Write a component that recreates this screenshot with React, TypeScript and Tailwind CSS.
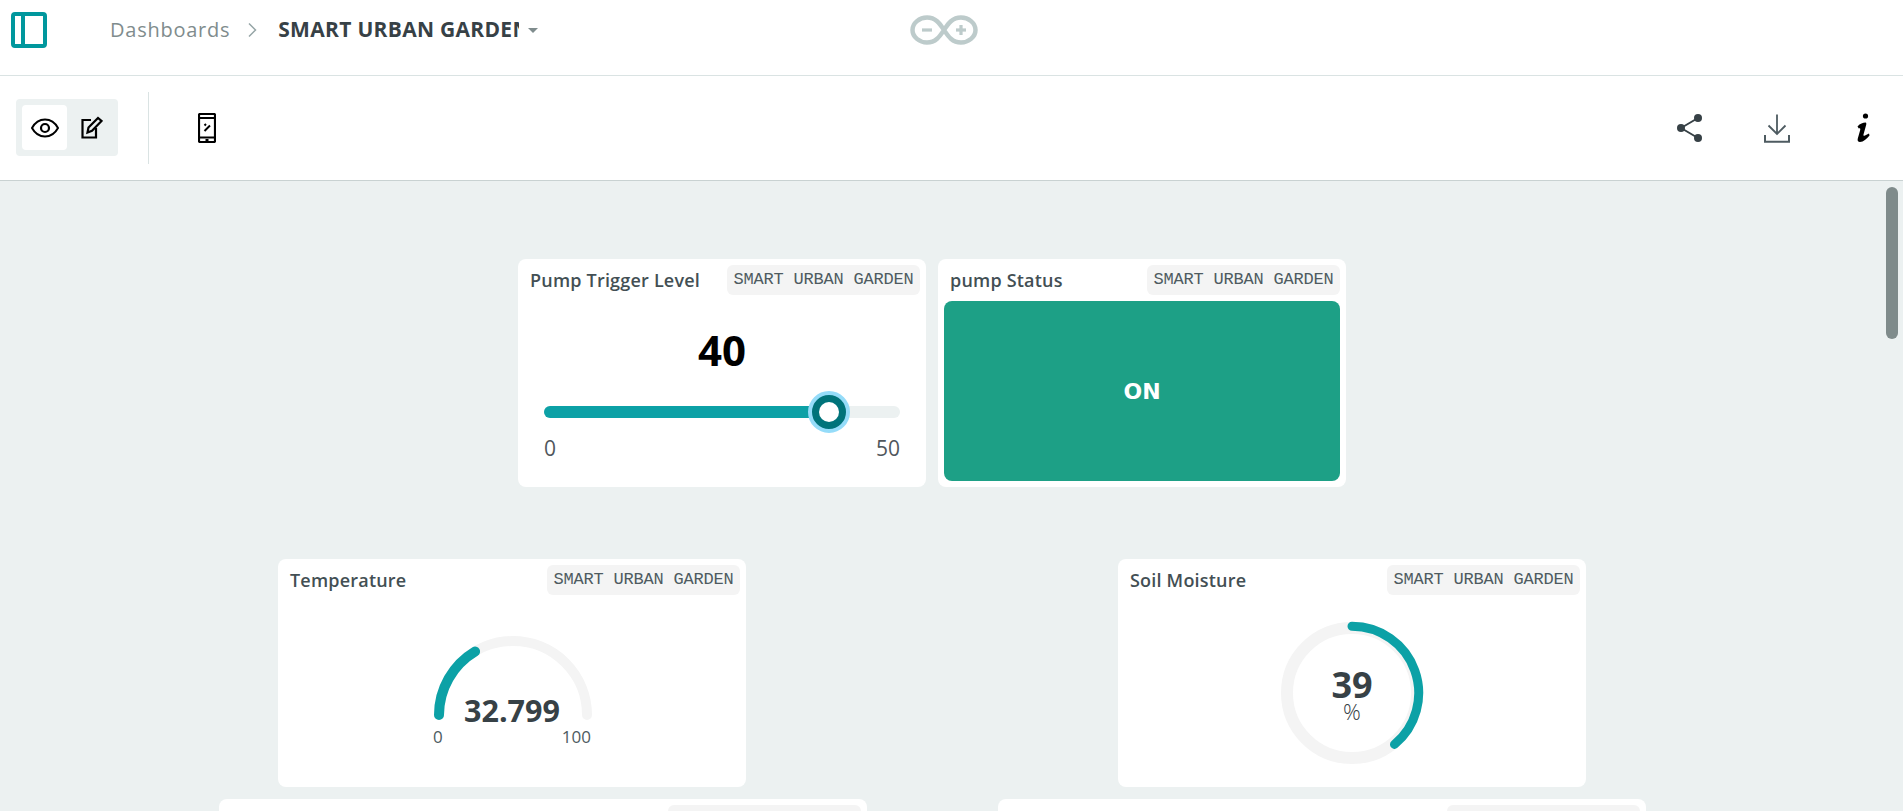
import React from 'react';

const TAG = 'SMART URBAN GARDEN';

type CardProps = {
  title: string;
  width: string;
  children?: React.ReactNode;
};

// widget shell: title on the left, thing name chip on the right
const Card: React.FC<CardProps> = ({ title, width, children }) => (
  <div className={`${width} h-[228px] shrink-0 rounded-lg bg-white p-[6px] flex flex-col`}>
    <div className="flex h-[30px] items-center justify-between shrink-0">
      <span className="pl-[6px] text-[18px] font-semibold tracking-[0.2px] text-[#434f54]">{title}</span>
      <span className="flex h-[30px] w-[193px] items-center justify-center rounded-[6px] bg-[#f4f4f4] font-['Liberation_Mono',monospace] text-[17px] tracking-[-0.2px] font-normal text-[#4e5b61] whitespace-nowrap">
        {TAG}
      </span>
    </div>
    {children}
  </div>
);

const PanelIcon = () => (
  <svg width="36" height="36" viewBox="0 0 36 36" fill="none" className="shrink-0">
    <rect x="2" y="2" width="32" height="32" rx="2" stroke="#00979d" strokeWidth="4" />
    <rect x="10" y="2" width="4" height="32" fill="#00979d" />
  </svg>
);

const ArduinoLogo = () => (
  <svg width="68" height="30" viewBox="0 0 68 30" fill="none">
    <path
      d="M17 2.500C26 2.500 30 9 34 15C38 21 42 27.500 51 27.500C58.500 27.500 65.500 22 65.500 15C65.500 8 58.500 2.500 51 2.500C42 2.500 38 9 34 15C30 21 26 27.500 17 27.500C9.500 27.500 2.500 22 2.500 15C2.500 8 9.500 2.500 17 2.500Z"
      stroke="#bdcbcb"
      strokeWidth="4.500"
    />
    <rect x="12" y="13.400" width="10" height="3.200" fill="#bdcbcb" />
    <rect x="46" y="13.400" width="10" height="3.200" fill="#bdcbcb" />
    <rect x="49.400" y="10" width="3.200" height="10" fill="#bdcbcb" />
  </svg>
);

const EyeIcon = () => (
  <svg width="28" height="20" viewBox="0 0 28 20" fill="none" stroke="#000" strokeWidth="2">
    <path d="M1 10C4 4.500 8.500 1.500 14 1.500S24 4.500 27 10C24 15.500 19.500 18.500 14 18.500S4 15.500 1 10Z" />
    <circle cx="14" cy="10" r="4" strokeWidth="2.200" />
  </svg>
);

const EditIcon = () => (
  <svg width="22" height="23" viewBox="0 0 22 23" fill="none" stroke="#000" strokeWidth="2.200">
    <path d="M10 4H1.500V21.500H15V12" />
    <path d="M6.500 16.500L7.500 11.500L17 2L20.500 5L11 14.800Z" />
  </svg>
);

const PhoneIcon = () => (
  <svg width="18" height="30" viewBox="0 0 18 30" fill="none" stroke="#000" strokeWidth="2">
    <rect x="1" y="1" width="16" height="28" rx="1" strokeWidth="2.200" />
    <path d="M1 5H17M1 24.500H17" />
    <path d="M6.500 12.500L8 11M6.500 18L12 12.500" />
    <path d="M7.500 27H10.500" />
  </svg>
);

const ShareIcon = () => (
  <svg width="27" height="30" viewBox="0 0 27 30" fill="#374146" stroke="#374146">
    <path d="M5 15L22 5M5 15L22 25" strokeWidth="2" fill="none" />
    <circle cx="5" cy="15" r="4" stroke="none" />
    <circle cx="22" cy="5" r="4" stroke="none" />
    <circle cx="22" cy="25" r="4" stroke="none" />
  </svg>
);

const DownloadIcon = () => (
  <svg width="26" height="29" viewBox="0 0 26 29" fill="none" stroke="#4e5b61" strokeWidth="1.800">
    <path d="M13 0.500V20M4.500 11.500L13 20L21.500 11.500" />
    <path d="M1 21V27.800H25V21" strokeWidth="2" />
  </svg>
);

const InfoIcon = () => (
  <svg width="14" height="30" viewBox="0 0 14 30" fill="#000">
    <circle cx="9.500" cy="3" r="2.600" />
    <path d="M1.500 13.500C4 10.500 7 9.500 9.500 9.500C10.500 9.500 10.500 11 10 12.500L7.500 21.500C7.200 22.800 8 23 9 22.500L13 20.500L13.500 22.500C10.500 26 7.500 28.800 4 29C2 29 1.200 27.500 1.800 25.500L4.200 17C4.500 15.500 4 15 2.800 15.500Z" />
  </svg>
);

const TemperatureGauge = () => (
  <div className="relative mx-auto mt-[35px] h-[140px] w-[170px]">
    <svg width="170" height="100" viewBox="0 0 170 100" fill="none" strokeLinecap="round" strokeWidth="10" className="ml-[1px]">
      <path d="M11 85A74 74 0 0 1 159 85" stroke="#f4f4f4" />
      <path d="M11 85A74 74 0 0 1 47.100 21.500" stroke="#0ca1a6" />
    </svg>
    <span className="absolute left-0 right-0 top-[60px] text-center text-[30.500px] font-bold leading-[40px] text-[#374146]">32.799</span>
    <span className="absolute left-[6px] top-[96px] text-[17px] leading-[22px] text-[#4e5b61]">0</span>
    <span className="absolute right-[6px] top-[96px] text-[17px] leading-[22px] text-[#4e5b61]">100</span>
  </div>
);

const MoistureRing = () => (
  <div className="relative mx-auto mt-[26px] h-[144px] w-[144px]">
    <svg width="144" height="144" viewBox="0 0 144 144" fill="none">
      <circle cx="72" cy="72" r="65" stroke="#f4f4f4" strokeWidth="12" />
      <path d="M72 5.300A66.700 66.700 0 0 1 114.500 123.400" stroke="#0ca1a6" strokeWidth="9" strokeLinecap="round" />
    </svg>
    <div className="absolute inset-0 flex flex-col items-center justify-center text-[#374146]">
      <span className="text-[36px] font-bold leading-[40px]">39</span>
      <span className="text-[22px] font-light leading-[20px] mt-[-4px] text-[#374146]">%</span>
    </div>
  </div>
);

export default function App() {
  return (
    <div className="relative h-[811px] overflow-hidden bg-[#ecf1f1] font-['Open_Sans',sans-serif]">
      <header className="flex h-[76px] items-center border-b border-[#dae3e3] bg-white pb-[15px] pl-[11px]">
        <PanelIcon />
        <span className="ml-[63px] text-[20px] tracking-[0.75px] text-[#7f8c8d]">Dashboards</span>
        <svg width="9" height="16" viewBox="0 0 9 16" fill="none" stroke="#95a5a6" strokeWidth="1.500" className="ml-[18px]">
          <path d="M1 1.500L7.500 8L1 14.500" />
        </svg>
        <span className="ml-[21px] w-[241px] overflow-hidden whitespace-nowrap text-[21px] font-bold tracking-[0.3px] text-[#374146]">SMART URBAN GARDEN</span>
        <span className="ml-[9px] h-0 w-0 border-x-[5px] border-t-[5px] border-x-transparent border-t-[#7f8c8d]" />
        <div className="ml-[372px]">
          <ArduinoLogo />
        </div>
      </header>

      <div className="flex h-[105px] items-center border-b border-[#c9d2d2] bg-white pl-[16px] pr-[33px]">
        <div className="flex h-[57px] w-[102px] items-center rounded bg-[#ecf1f1] pl-[6px] mt-[-1px]">
          <div className="flex h-[45px] w-[45px] items-center justify-center rounded bg-white">
            <EyeIcon />
          </div>
          <div className="ml-[14px]">
            <EditIcon />
          </div>
        </div>
        <div className="ml-[30px] h-[72px] w-px bg-[#dae3e3]" />
        <div className="ml-[49px]">
          <PhoneIcon />
        </div>
        <div className="ml-auto flex items-center">
          <ShareIcon />
          <div className="ml-[61px]">
            <DownloadIcon />
          </div>
          <div className="ml-[66px]">
            <InfoIcon />
          </div>
        </div>
      </div>

      <main className="flex flex-col items-center pr-[39px] pt-[78px]">
        <div className="flex gap-[12px]">
          <Card title="Pump Trigger Level" width="w-[408px]">
            <div className="mt-[28px] text-center text-[42px] font-bold leading-[54px] text-black">40</div>
            <div className="relative mx-[20px] mt-[29px] h-[12px] rounded-full bg-[#ecf1f1]">
              <div className="h-full w-[285px] rounded-full bg-[#0ca1a6]" />
              <div className="absolute left-[264px] top-[-15px] h-[42px] w-[42px] rounded-full border-[4px] border-[#95dcf9] bg-[#00737a] p-[7px]">
                <div className="h-full w-full rounded-full bg-white" />
              </div>
            </div>
            <div className="mx-[20px] mt-[17px] flex justify-between text-[21px] leading-[27px] text-[#50575c]">
              <span>0</span>
              <span>50</span>
            </div>
          </Card>
          <Card title="pump Status" width="w-[408px]">
            <div className="mt-[6px] flex h-[180px] items-center justify-center rounded-lg bg-[#1da086] font-['DejaVu_Sans',sans-serif] text-[22px] font-bold text-white">
              ON
            </div>
          </Card>
        </div>

        <div className="mt-[72px] flex gap-[372px]">
          <Card title="Temperature" width="w-[468px]">
            <TemperatureGauge />
          </Card>
          <Card title="Soil Moisture" width="w-[468px]">
            <MoistureRing />
          </Card>
        </div>

        <div className="mt-[12px] flex gap-[131px]">
          <Card title="" width="w-[648px]" />
          <Card title="" width="w-[648px]" />
        </div>
      </main>

      {/* scrollbar thumb sits over the canvas */}
      <div className="absolute right-[5px] top-[187px] h-[152px] w-[12px] rounded-full bg-[#7f8b8b]" />
    </div>
  );
}
